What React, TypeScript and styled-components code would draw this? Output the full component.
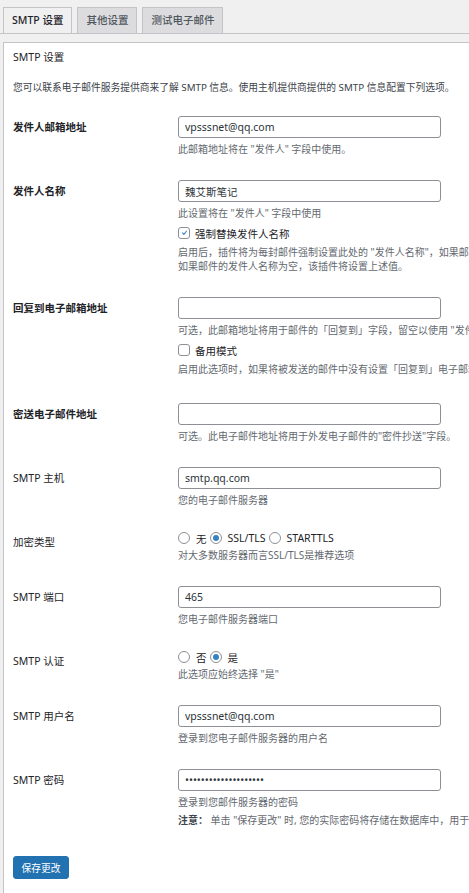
import React from "react";
import styled, { createGlobalStyle } from "styled-components";

const GlobalStyle = createGlobalStyle`
  html, body {
    margin: 0;
    padding: 0;
    background: #f0f0f1;
    overflow: hidden;
  }
  body {
    font-family: "Noto Sans", "Noto Sans CJK SC", sans-serif;
    color: #3c434a;
  }
`;

const Page = styled.div`
  width: 900px;
  padding-top: 7px;
`;

const TabBar = styled.nav`
  display: flex;
  gap: 5px;
  padding-left: 3px;
  border-bottom: 1px solid #c3c4c7;
`;

const Tab = styled.a<{ $active?: boolean }>`
  box-sizing: border-box;
  height: 27px;
  margin-bottom: -1px;
  padding: 0 8px;
  border: 1px solid #c3c4c7;
  background: ${(p) => (p.$active ? "#f0f0f1" : "#dcdcde")};
  color: ${(p) => (p.$active ? "#1d2327" : "#50575e")};
  font-size: 10.5px;
  font-weight: 500;
  line-height: 25px;
  text-decoration: none;
  white-space: nowrap;
`;

const Panel = styled.section`
  margin: 8px 0 0 3px;
  padding: 0 9px 80px;
  background: #fff;
  border: 1px solid #c3c4c7;
`;

const PanelTitle = styled.h3`
  margin: 6px 0 0;
  font-size: 10.5px;
  line-height: 16px;
  font-weight: 400;
  color: #1d2327;
`;

const Intro = styled.p`
  margin: 16px 0 9px;
  font-size: 9.75px;
  line-height: 14px;
  color: #3c434a;
  white-space: nowrap;
`;

const Row = styled.div`
  display: grid;
  grid-template-columns: 165px auto;
  padding: 12px 0;
`;

const Label = styled.label<{ $strong?: boolean }>`
  font-size: 10.5px;
  line-height: 22px;
  font-weight: ${(p) => (p.$strong ? 700 : 400)};
  color: #1d2327;
  white-space: nowrap;
`;

const Field = styled.div`
  display: flex;
  flex-direction: column;
  align-items: flex-start;
`;

const TextInput = styled.input`
  box-sizing: border-box;
  width: 263px;
  height: 22px;
  margin: 0;
  padding: 0 6px;
  border: 1px solid #8c8f94;
  border-radius: 3px;
  background: #fff;
  color: #2c3338;
  font-family: inherit;
  font-size: 10.5px;
  outline: none;
`;

const Hint = styled.p<{ $top?: number; $bottom?: number }>`
  margin: ${(p) => p.$top ?? 4}px 0 ${(p) => p.$bottom ?? 0}px;
  font-size: 10px;
  line-height: 14px;
  color: #646970;
  white-space: nowrap;

  strong {
    color: #3c434a;
    font-weight: 700;
  }
`;

const OptionLine = styled.div<{ $top?: number }>`
  display: flex;
  align-items: center;
  margin-top: ${(p) => p.$top ?? 0}px;
  height: 14px;
  font-size: 10.5px;
  color: #1d2327;
  white-space: nowrap;
`;

const Box = styled.span`
  box-sizing: border-box;
  display: inline-flex;
  align-items: center;
  justify-content: center;
  width: 12px;
  height: 12px;
  margin-right: 5px;
  border: 1px solid #8c8f94;
  border-radius: 3px;
  background: #fff;
`;

const Radio = styled.span<{ $checked?: boolean }>`
  box-sizing: border-box;
  display: inline-flex;
  align-items: center;
  justify-content: center;
  width: 12px;
  height: 12px;
  margin-right: 6px;
  border: 1px solid #8c8f94;
  border-radius: 50%;
  background: #fff;

  &::before {
    content: "";
    width: 6px;
    height: 6px;
    border-radius: 50%;
    background: ${(p) => (p.$checked ? "#3582c4" : "transparent")};
  }
`;

const RadioText = styled.span`
  margin-right: 3px;
`;

const SaveButton = styled.button`
  box-sizing: border-box;
  margin-top: 17px;
  height: 23px;
  padding: 0 7.5px;
  border: 1px solid #2271b1;
  border-radius: 3px;
  background: #2271b1;
  color: #fff;
  font-family: inherit;
  font-size: 9.75px;
  cursor: pointer;
`;

// tick used inside a checked checkbox
const Check = () => (
  <svg width="12" height="12" viewBox="0 0 20 20">
    <path fill="#3582c4" d="M14.83 4.89l1.34.94-5.81 8.38H9.02L5.78 9.67l1.34-1.25 2.57 2.4z" />
  </svg>
);

interface RadioGroupProps {
  options: string[]
  selected: number
}

const RadioGroup = ({ options, selected }: RadioGroupProps) => (
  <OptionLine>
    {options.map((o, i) => (
      <React.Fragment key={o}>
        <Radio $checked={i === selected} />
        <RadioText>{o}</RadioText>
      </React.Fragment>
    ))}
  </OptionLine>
);

export default function App() {
  return (
    <Page>
      <GlobalStyle />
      <TabBar>
        <Tab $active>SMTP 设置</Tab>
        <Tab>其他设置</Tab>
        <Tab>测试电子邮件</Tab>
      </TabBar>

      <Panel>
        <PanelTitle>SMTP 设置</PanelTitle>
        <Intro>您可以联系电子邮件服务提供商来了解 SMTP 信息。使用主机提供商提供的 SMTP 信息配置下列选项。</Intro>

        <Row>
          <Label $strong>发件人邮箱地址</Label>
          <Field>
            <TextInput defaultValue="vpsssnet@qq.com" />
            <Hint>此邮箱地址将在 "发件人" 字段中使用。</Hint>
          </Field>
        </Row>

        <Row>
          <Label $strong>发件人名称</Label>
          <Field>
            <TextInput defaultValue="魏艾斯笔记" />
            <Hint>此设置将在 "发件人" 字段中使用</Hint>
            <OptionLine $top={6}>
              <Box><Check /></Box>
              强制替换发件人名称
            </OptionLine>
            <Hint $top={5}>启用后，插件将为每封邮件强制设置此处的 "发件人名称"，如果邮件中已设置发件人名称也会被替换。</Hint>
            <Hint $top={0}>如果邮件的发件人名称为空，该插件将设置上述值。</Hint>
          </Field>
        </Row>

        <Row>
          <Label $strong>回复到电子邮箱地址</Label>
          <Field>
            <TextInput />
            <Hint>可选，此邮箱地址将用于邮件的「回复到」字段，留空以使用 "发件人" 邮箱地址作为回复地址。</Hint>
            <OptionLine $top={6}>
              <Box />
              备用模式
            </OptionLine>
            <Hint $top={5} $bottom={3}>启用此选项时，如果将被发送的邮件中没有设置「回复到」电子邮箱地址，则使用上面的地址。</Hint>
          </Field>
        </Row>

        <Row>
          <Label $strong>密送电子邮件地址</Label>
          <Field>
            <TextInput />
            <Hint>可选。此电子邮件地址将用于外发电子邮件的"密件抄送"字段。</Hint>
          </Field>
        </Row>

        <Row>
          <Label>SMTP 主机</Label>
          <Field>
            <TextInput defaultValue="smtp.qq.com" />
            <Hint>您的电子邮件服务器</Hint>
          </Field>
        </Row>

        <Row>
          <Label>加密类型</Label>
          <Field>
            <RadioGroup options={["无", "SSL/TLS", "STARTTLS"]} selected={1} />
            <Hint $top={3}>对大多数服务器而言SSL/TLS是推荐选项</Hint>
          </Field>
        </Row>

        <Row>
          <Label>SMTP 端口</Label>
          <Field>
            <TextInput defaultValue="465" />
            <Hint>您电子邮件服务器端口</Hint>
          </Field>
        </Row>

        <Row>
          <Label>SMTP 认证</Label>
          <Field>
            <RadioGroup options={["否", "是"]} selected={1} />
            <Hint $top={3}>此选项应始终选择 "是"</Hint>
          </Field>
        </Row>

        <Row>
          <Label>SMTP 用户名</Label>
          <Field>
            <TextInput defaultValue="vpsssnet@qq.com" />
            <Hint>登录到您电子邮件服务器的用户名</Hint>
          </Field>
        </Row>

        <Row>
          <Label>SMTP 密码</Label>
          <Field>
            <TextInput type="password" defaultValue="abcdefghijklmnopqrst" />
            <Hint>登录到您邮件服务器的密码</Hint>
            <Hint><strong>注意：</strong> 单击 "保存更改" 时, 您的实际密码将存储在数据库中，用于发送邮件时的身份验证。</Hint>
          </Field>
        </Row>

        <SaveButton>保存更改</SaveButton>
      </Panel>
    </Page>
  );
}
